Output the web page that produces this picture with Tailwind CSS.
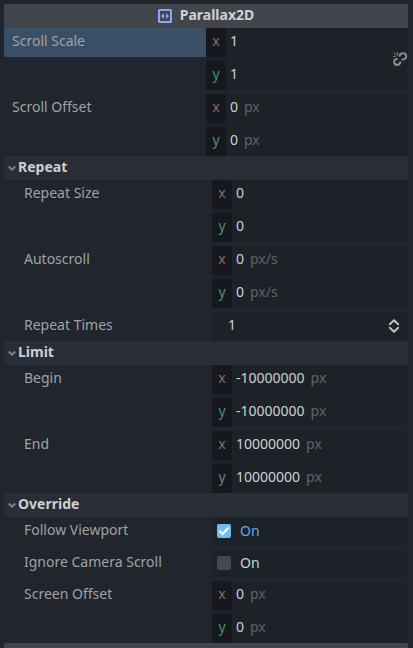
<!DOCTYPE html>
<html lang="en">
<head>
<meta charset="utf-8">
<title>Inspector</title>
<script src="https://cdn.jsdelivr.net/npm/@tailwindcss/browser@4"></script>
</head>
<body class="w-[413px] h-[648px] overflow-hidden bg-[#21252e] pt-1 pl-1 font-['Noto_Sans',sans-serif] text-[14px] leading-[25px] text-[#a0a2a5]">
<main id="inspector" class="w-[404px]">
  <header class="flex h-6 items-center justify-center gap-[7px] rounded-t-[2px] bg-[#42454c] font-bold leading-[21px] text-[#cfd1d3] pr-[1px]">
    <svg class="h-4 w-4" viewBox="0 0 16 16"><rect x="2" y="2" width="12" height="12" rx=".5" fill="none" stroke="#8da5f3" stroke-width="2"/><path d="M7 5v6L4 8zM9 5v6l3-3z" fill="#8da5f3"/></svg>
    <span class="h-6">Parallax2D</span>
  </header>
</main>
<template id="section">
  <div class="flex h-6 items-start gap-[2px] bg-[#292d35] pl-[4px] font-bold leading-[21px] text-[#cdcfd1]">
    <svg class="mt-2 h-2 w-2" viewBox="0 0 8 8"><path d="M.7 2.5 4 5.7 7.3 2.5" fill="none" stroke="#7f8287" stroke-width="1.9"/></svg>
    <span class="h-6" data-title></span>
  </div>
</template>
<template id="row">
  <div class="mb-1 flex items-start last:mb-0">
    <div class="h-[29px] shrink-0" data-label></div>
    <div class="relative min-w-0 flex-1 rounded-[2px] bg-[#1d2229]" data-field></div>
  </div>
</template>
<template id="axis">
  <div class="flex h-[29px] first:mb-1" data-line>
    <div class="w-5 rounded-[2px] bg-[#15181f] text-center" data-axis></div>
    <span class="ml-1 text-[#cfd1d3]" data-value></span>
    <span class="ml-[6px] text-[#5f6267]" data-unit></span>
  </div>
</template>
<template id="spin">
  <div class="flex h-[29px] justify-between pl-4 pr-[6px] text-[#cfd1d3]">
    <span>1</span>
    <svg class="mt-[6px] h-4 w-4" viewBox="0 0 16 16"><path d="M3.8 6.2 8 2.2l4.2 4M3.8 9.8l4.2 4 4.2-4" fill="none" stroke="#bcbec0" stroke-width="2" stroke-linecap="round" stroke-linejoin="round"/></svg>
  </div>
</template>
<template id="checked">
  <div class="flex h-7 pl-[5px] leading-[27px] text-[#63a9e6]">
    <svg class="mt-[7px] mr-[9px] h-[14px] w-[14px]" viewBox="0 0 14 14"><rect width="14" height="14" rx="2" fill="#70bafa"/><path d="m3 7.4 2.6 2.5L11 4.3" fill="none" stroke="#fff" stroke-width="2.1" stroke-linecap="round"/></svg>On
  </div>
</template>
<template id="unchecked">
  <div class="flex h-7 pl-[5px] leading-[27px] text-[#cfd1d3]">
    <span class="mt-[7px] mr-[9px] h-[14px] w-[14px] rounded-[2px] bg-[#45484f]"></span>On
  </div>
</template>
<template id="link">
  <svg class="absolute top-[23px] right-0 h-4 w-4" viewBox="0 0 16 16" fill="none" stroke="#8b8e91" stroke-width="2"><path d="M7.4 5.6C7.6 3.4 9.2 2.2 11 2.2A3.1 3.1 0 0 1 11.3 8.4H9.6M8.4 10.6C8.4 12.8 6.8 14 5 14A3.1 3.1 0 0 1 4.5 7.9H5.6"/><path d="M5.4 1.2v3M1.8 1.6l2.7 2.8M1.2 5.4h2.5" stroke-width="1"/></svg>
</template>
<script>
  const inspector = document.getElementById('inspector');
  const clone = id => document.getElementById(id).content.firstElementChild.cloneNode(true);
  const groups = [
    { rows: [['Scroll Scale', '1', '1', '', 'link'], ['Scroll Offset', '0', '0', 'px']] },
    { title: 'Repeat', rows: [['Repeat Size', '0', '0', ''], ['Autoscroll', '0', '0', 'px/s'], ['Repeat Times', 'spin']] },
    { title: 'Limit', rows: [['Begin', '-10000000', '-10000000', 'px'], ['End', '10000000', '10000000', 'px']] },
    { title: 'Override', rows: [['Follow Viewport', 'checked'], ['Ignore Camera Scroll', 'unchecked'], ['Screen Offset', '0', '0', 'px']] }
  ];
  for (const g of groups) {
    if (g.title) {
      const s = clone('section');
      s.querySelector('[data-title]').textContent = g.title;
      inspector.append(s);
    }
    const list = document.createElement('section');
    for (const r of g.rows) {
      const row = clone('row');
      const label = row.querySelector('[data-label]');
      const field = row.querySelector('[data-field]');
      label.textContent = r[0];
      label.className += g.title ? ' w-[208px] pl-5' : ' w-[202px] pl-2';
      if (r[4]) label.className += ' rounded-l-[2px] bg-[#384f66]';
      if (r.length === 2) {
        if (r[1] !== 'spin') label.classList.replace('h-[29px]', 'h-7');
        field.append(clone(r[1]));
      } else {
        ['x', 'y'].forEach((a, i) => {
          const el = clone('axis');
          const name = el.querySelector('[data-axis]');
          name.textContent = a;
          name.className += a === 'x' ? ' text-[#8f6a60]' : ' text-[#4f9168]';
          el.querySelector('[data-value]').textContent = r[i + 1];
          el.querySelector('[data-unit]').textContent = r[3];
          field.append(el);
        });
        if (r[4]) field.append(clone('link'));
      }
      list.append(row);
    }
    inspector.append(list);
  }
  const next = document.createElement('div');
  next.className = 'h-6 rounded-t-[2px] bg-[#42454c]';
  inspector.append(next);
</script>
</body>
</html>
